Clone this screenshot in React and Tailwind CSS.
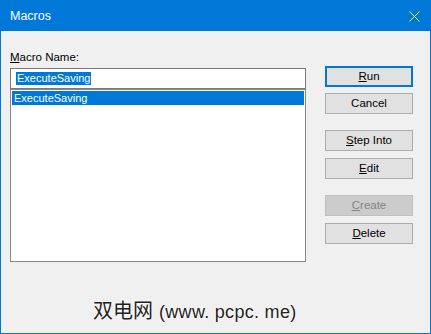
import { X } from "lucide-react";

const font = { fontFamily: '"Liberation Sans", Arial, sans-serif' };

function DlgButton({ children, primary, disabled, className = "" }) {
  return (
    <button
      className={
        "h-[21px] w-[88px] flex items-center justify-center text-[11.5px] " +
        (primary
          ? "border-2 border-[#0078d7] bg-[#e1e1e1] text-black "
          : disabled
          ? "border border-[#bfbfbf] bg-[#cccccc] text-[#838383] "
          : "border border-[#adadad] bg-[#e1e1e1] text-black ") +
        className
      }
    >
      {children}
    </button>
  );
}

export default function App() {
  return (
    <div
      className="relative w-[431px] h-[334px] border border-[#0078d7] flex flex-col bg-[#f0f0f0]"
      style={font}
    >
      {/* title bar */}
      <div className="h-[30px] bg-[#0078d7] flex items-center justify-between pl-[9px] pr-[6px]">
        <span className="text-white text-[12.5px]">Macros</span>
        <X className="text-white w-[19px] h-[19px]" strokeWidth={1.1} />
      </div>

      <div className="flex-1 flex pt-[18px] pl-[9px]">
        <div className="w-[296px] flex flex-col">
          <div className="h-[16px] text-[11.5px] leading-[16px] text-black">
            <span className="underline">M</span>acro Name:
          </div>
          <div className="mt-[3px] h-[21px] border border-[#7a7a7a] bg-white flex items-center pl-[5px]">
            <span className="bg-[#0078d7] text-white text-[11px] leading-[13px] px-[1px]">
              ExecuteSaving
            </span>
          </div>
          <div className="h-[173px] border border-[#828790] bg-white p-[1px]">
            <div className="h-[14px] bg-[#0078d7] text-white text-[11px] leading-[14px] pl-[2px]">
              ExecuteSaving
            </div>
          </div>
        </div>

        <div className="ml-[19px] pt-[17px] flex flex-col">
          <DlgButton primary>
            <span><span className="underline">R</span>un</span>
          </DlgButton>
          <DlgButton className="mt-[6px]">Cancel</DlgButton>
          <DlgButton className="mt-[16px]">
            <span><span className="underline">S</span>tep Into</span>
          </DlgButton>
          <DlgButton className="mt-[7px]">
            <span><span className="underline">E</span>dit</span>
          </DlgButton>
          <DlgButton disabled className="mt-[16px]">
            <span><span className="underline">C</span>reate</span>
          </DlgButton>
          <DlgButton className="mt-[7px]">
            <span><span className="underline">D</span>elete</span>
          </DlgButton>
        </div>
      </div>

      {/* watermark */}
      <div
        className="absolute left-[92px] top-[296px] text-[20px] leading-[26px] text-[#222] [text-shadow:0_0_2px_#fff,0_0_2px_#fff]"
        style={{ fontFamily: '"Noto Sans CJK SC", "Liberation Sans", sans-serif' }}
      >
        双电网
        <span
          style={{ fontFamily: '"Liberation Sans", sans-serif' }}
          className="ml-[6px] text-[18px] tracking-[0.3px]"
        >
          (www. pcpc. me)
        </span>
      </div>
    </div>
  );
}
